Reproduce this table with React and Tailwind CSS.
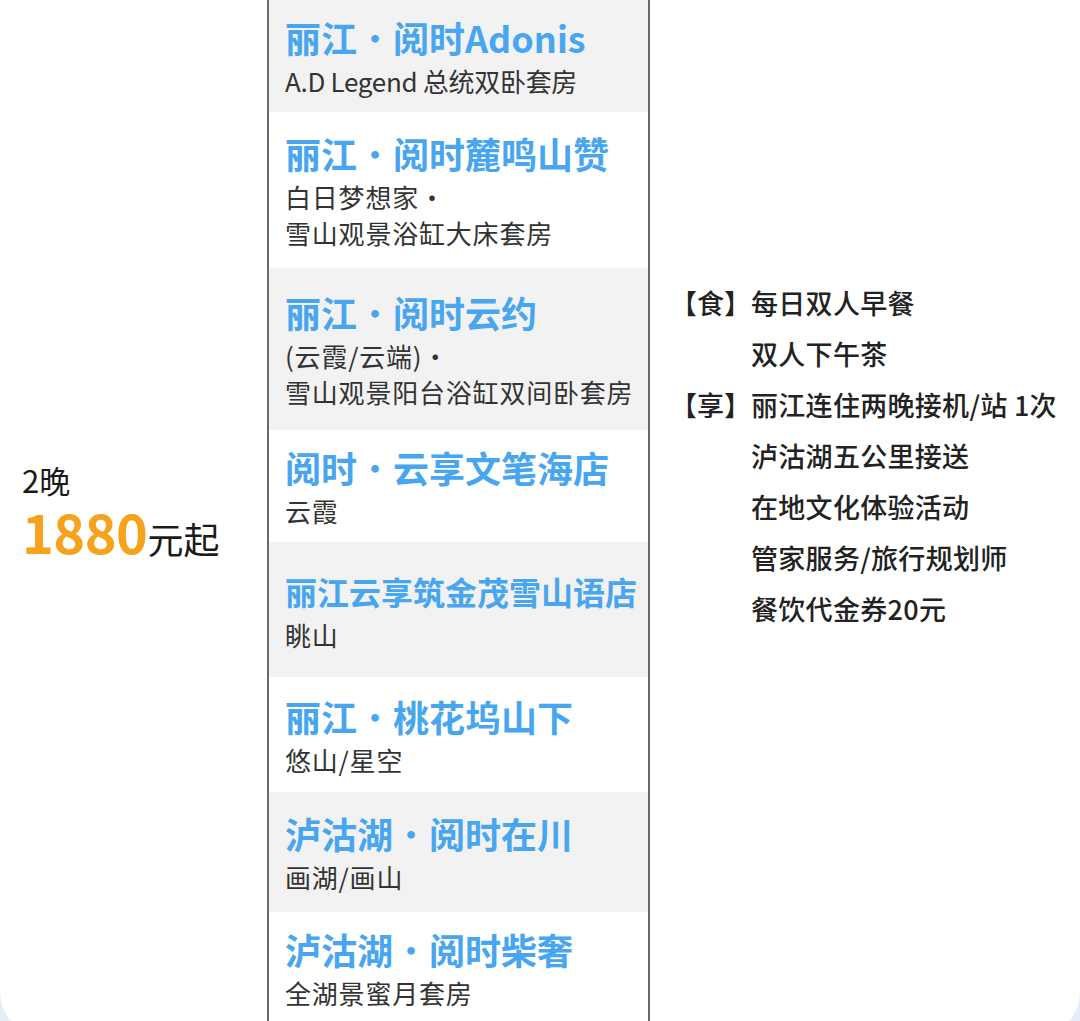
import React from "react";

const rows = [
  { a: "丽江", b: "阅时Adonis", sub: ["A.D Legend 总统双卧套房"], h: "h-[112px]", bg: "bg-[#f2f2f2]", latin: true },
  { a: "丽江", b: "阅时麓鸣山赞", sub: ["白日梦想家·", "雪山观景浴缸大床套房"], h: "h-[156px]", bg: "bg-white" },
  { a: "丽江", b: "阅时云约", sub: ["(云霞/云端)·", "雪山观景阳台浴缸双间卧套房"], h: "h-[162px]", bg: "bg-[#f2f2f2]" },
  { a: "阅时", b: "云享文笔海店", sub: ["云霞"], h: "h-[112px]", bg: "bg-white" },
  { whole: "丽江云享筑金茂雪山语店", sub: ["眺山"], h: "h-[135px]", bg: "bg-[#f2f2f2]" },
  { a: "丽江", b: "桃花坞山下", sub: ["悠山/星空"], h: "h-[115px]", bg: "bg-white" },
  { a: "泸沽湖", b: "阅时在川", sub: ["画湖/画山"], h: "h-[120px]", bg: "bg-[#f2f2f2]" },
  { a: "泸沽湖", b: "阅时柴奢", sub: ["全湖景蜜月套房"], h: "h-[112px]", bg: "bg-white" },
];

const perks = [
  { label: "【食】", text: "每日双人早餐" },
  { label: "", text: "双人下午茶" },
  { label: "【享】", text: "丽江连住两晚接机/站 1次" },
  { label: "", text: "泸沽湖五公里接送" },
  { label: "", text: "在地文化体验活动" },
  { label: "", text: "管家服务/旅行规划师" },
  { label: "", text: "餐饮代金券20元" },
];

const font = { fontFamily: '"Noto Sans CJK SC", "Noto Sans", sans-serif' };

export default function App() {
  return (
    <div className="h-[1021px] w-[1080px] overflow-hidden bg-[#e4edf8]" style={font}>
      <div className="h-[1036px] bg-white rounded-b-[44px] grid grid-cols-[267px_383px_1fr]">
        {/* left */}
        <div className="pt-[460px] pl-[22px] text-[#1a1a1a]">
          <div className="text-[31px] leading-[40px]">2晚</div>
          <div className="mt-[4px] flex items-baseline h-[54px]">
            <span className="text-[54px] leading-[54px] font-bold text-[#f6a21c] tracking-[-0.5px]">1880</span>
            <span className="text-[36px] leading-[54px]">元起</span>
          </div>
        </div>

        {/* middle */}
        <div className="border-x-2 border-[#6a6a6a] flex flex-col">
          {rows.map((r, i) => (
            <div key={i} className={`${r.h} ${r.bg} flex flex-col justify-center pl-[16px]`}>
              {r.whole ? (
                <div className="text-[32px] leading-[48px] font-bold text-[#48a6f0] whitespace-nowrap">{r.whole}</div>
              ) : (
                <div className="text-[36px] leading-[48px] font-bold text-[#48a6f0] whitespace-nowrap">
                  {r.a}
                  <span className="inline-block w-[36px] text-center font-normal">·</span>
                  {r.b}
                </div>
              )}
              <div
                className={
                  r.latin
                    ? "mt-[2px] text-[26px] leading-[36px] tracking-[-0.3px] text-[#333333]"
                    : "mt-[2px] text-[26px] leading-[36px] tracking-[0.8px] text-[#333333]"
                }
              >
                {r.sub.map((s, j) => (
                  <div key={j} className="whitespace-nowrap">{s}</div>
                ))}
              </div>
            </div>
          ))}
          <div className="flex-1 bg-white" />
        </div>

        {/* right */}
        <div className="pt-[277px] pl-[20px] text-[27px] leading-[51px] tracking-[0.3px] font-medium text-[#222222]">
          {perks.map((p, i) => (
            <div key={i} className="flex whitespace-nowrap">
              <span className="w-[81px] shrink-0 tracking-normal">{p.label}</span>
              <span>{p.text}</span>
            </div>
          ))}
        </div>
      </div>
    </div>
  );
}
